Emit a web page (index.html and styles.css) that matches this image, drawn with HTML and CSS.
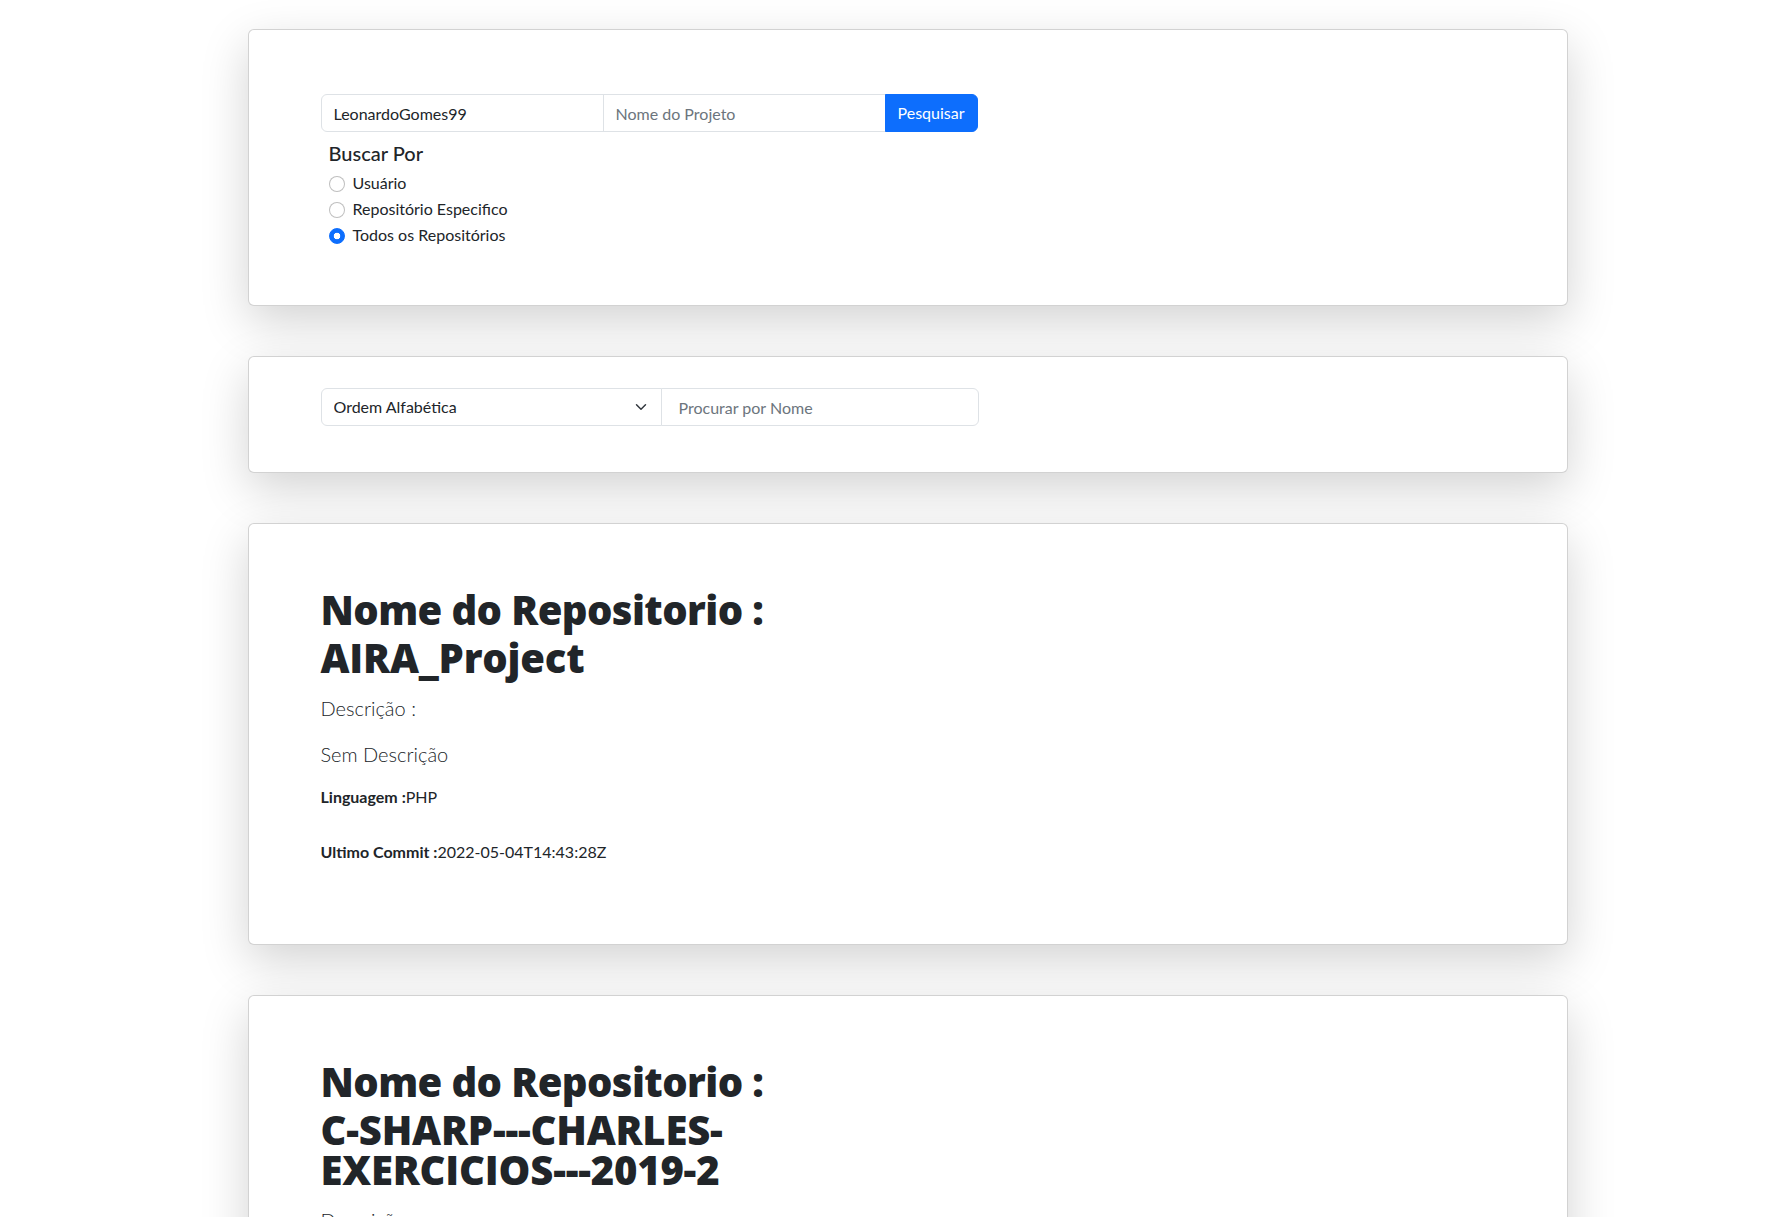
FILE: index.html
```html
<!DOCTYPE html>
<html lang="pt-BR">
<head>
<meta charset="utf-8">
<title>Buscar Repositórios</title>
<link rel="stylesheet" href="styles.css">
</head>
<body>
<main class="page">
  <section class="card card-search">
    <form class="search-form">
      <div class="input-group">
        <input class="form-control" type="text" value="LeonardoGomes99">
        <input class="form-control" type="text" placeholder="Nome do Projeto">
        <button class="btn-primary" type="button">Pesquisar</button>
      </div>
      <h5 class="search-title">Buscar Por</h5>
      <div class="radio-list">
        <label class="form-check"><input class="radio" type="radio" name="tipo"><span>Usuário</span></label>
        <label class="form-check"><input class="radio" type="radio" name="tipo"><span>Repositório Especifico</span></label>
        <label class="form-check"><input class="radio" type="radio" name="tipo" checked><span>Todos os Repositórios</span></label>
      </div>
    </form>
  </section>

  <section class="card card-filter">
    <div class="input-group">
      <select class="form-select">
        <option>Ordem Alfabética</option>
      </select>
      <input class="form-control" type="text" placeholder="Procurar por Nome">
    </div>
  </section>

  <section class="card card-repo">
    <div class="repo-col">
      <h1 class="repo-title"><span class="repo-label">Nome do Repositorio :</span><span class="repo-name">AIRA_Project</span></h1>
      <p class="lead">Descrição :</p>
      <p class="lead">Sem Descrição</p>
      <p class="meta meta-lang"><strong>Linguagem :</strong>PHP</p>
      <p class="meta"><strong>Ultimo Commit :</strong>2022-05-04T14:43:28Z</p>
    </div>
  </section>

  <section class="card card-repo">
    <div class="repo-col">
      <h1 class="repo-title"><span class="repo-label">Nome do Repositorio :</span><span class="repo-name">C-SHARP---CHARLES-EXERCICIOS---2019-2</span></h1>
      <p class="lead">Descrição :</p>
      <p class="lead">Sem Descrição</p>
      <p class="meta meta-lang"><strong>Linguagem :</strong>C#</p>
      <p class="meta"><strong>Ultimo Commit :</strong>2019-11-28T01:12:45Z</p>
    </div>
  </section>
</main>
</body>
</html>
```
FILE: styles.css
```css
* { box-sizing: border-box; }

html, body {
  margin: 0;
  padding: 0;
  background: #fff;
}

body {
  font-family: "Lato", "Open Sans", sans-serif;
  font-size: 16px;
  line-height: 24px;
  color: #212529;
}

.page {
  width: 1320px;
  margin-left: calc(50% - 645px);
  padding-top: 29px;
  display: flex;
  flex-direction: column;
  gap: 50px;
}

.card {
  background: #fff;
  border: 1px solid rgba(0, 0, 0, 0.175);
  border-radius: 6px;
  box-shadow: 0 16px 48px rgba(0, 0, 0, 0.175);
  padding-left: 72px;
  padding-right: 72px;
}

.card-search {
  padding-top: 64px;
  padding-bottom: 58px;
}

.card-filter {
  padding-top: 31px;
  padding-bottom: 46px;
}

.card-repo {
  padding-top: 62px;
  padding-bottom: 64px;
}

/* input group */
.input-group {
  display: flex;
  width: 658px;
  height: 38px;
}

.form-control,
.form-select {
  font-family: inherit;
  font-size: 16px;
  font-weight: 400;
  line-height: 24px;
  color: #212529;
  background-color: #fff;
  border: 1px solid #dee2e6;
  padding: 6px 12px;
  margin: 0;
  height: 38px;
  outline: none;
  border-radius: 0;
}

.form-control::placeholder {
  color: #6c757d;
  opacity: 1;
}

.card-search .form-control {
  flex: 0 0 283px;
  width: 283px;
}

.input-group > :first-child {
  border-radius: 6px 0 0 6px;
}

.input-group > * + * {
  margin-left: -1px;
}

.card-filter .form-select {
  flex: 0 0 341px;
  width: 341px;
  appearance: none;
  -webkit-appearance: none;
  padding-right: 36px;
  background-image: url("data:image/svg+xml,%3csvg xmlns='http://www.w3.org/2000/svg' viewBox='0 0 16 16'%3e%3cpath fill='none' stroke='%23343a40' stroke-linecap='round' stroke-linejoin='round' stroke-width='2' d='m2 5 6 6 6-6'/%3e%3c/svg%3e");
  background-repeat: no-repeat;
  background-position: right 12px center;
  background-size: 16px 12px;
}

.card-filter .form-control {
  flex: 1 1 auto;
  min-width: 0;
  padding-left: 17px;
  border-radius: 0 6px 6px 0;
}

.btn-primary {
  flex: 0 0 auto;
  width: 93px;
  height: 38px;
  font-family: inherit;
  font-size: 16px;
  line-height: 24px;
  color: #fff;
  background: #0d6efd;
  border: 1px solid #0d6efd;
  border-radius: 0 6px 6px 0;
  padding: 6px 12px;
  cursor: pointer;
  position: relative;
  z-index: 1;
}

/* buscar por */
.search-title {
  margin: 9px 0 6px 8px;
  font-size: 20px;
  line-height: 24px;
  font-weight: 500;
}

.radio-list {
  display: flex;
  flex-direction: column;
  gap: 2px;
  padding-left: 8px;
}

.form-check {
  display: flex;
  align-items: flex-start;
  min-height: 24px;
  gap: 8px;
}

.radio {
  appearance: none;
  -webkit-appearance: none;
  width: 16px;
  height: 16px;
  margin: 5px 0 0 0;
  border: 1px solid rgba(0, 0, 0, 0.25);
  border-radius: 50%;
  background: #fff;
  flex: 0 0 16px;
}

.radio:checked {
  border-color: #0d6efd;
  background: radial-gradient(circle, #fff 0 3px, #0d6efd 3.6px);
}

/* repositories */
.repo-col {
  width: 520px;
}

.repo-title {
  margin: 0 0 15px 0;
  font-family: "Open Sans", "Lato", sans-serif;
  font-weight: 800;
  font-size: 40px;
  letter-spacing: -0.6px;
  color: #212529;
}

.repo-label {
  display: block;
  line-height: 48px;
  white-space: nowrap;
}

.repo-name {
  display: block;
  line-height: 40px;
  margin-top: 4px;
  letter-spacing: -0.2px;
}

.lead {
  margin: 0 0 16px 0;
  font-size: 20px;
  line-height: 30px;
  font-weight: 300;
}

.meta {
  margin: 0 0 16px 0;
  font-size: 16px;
  line-height: 24px;
}

.meta strong {
  font-weight: 700;
}

.meta-lang {
  margin-bottom: 31px;
}
```
